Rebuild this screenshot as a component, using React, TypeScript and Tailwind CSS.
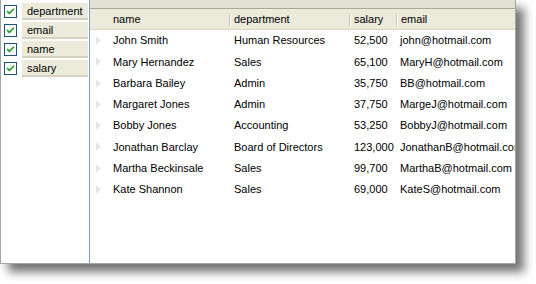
import { Check } from "lucide-react";

const fields = ["department", "email", "name", "salary"];

const rows = [
  ["John Smith", "Human Resources", "52,500", "john@hotmail.com"],
  ["Mary Hernandez", "Sales", "65,100", "MaryH@hotmail.com"],
  ["Barbara Bailey", "Admin", "35,750", "BB@hotmail.com"],
  ["Margaret Jones", "Admin", "37,750", "MargeJ@hotmail.com"],
  ["Bobby Jones", "Accounting", "53,250", "BobbyJ@hotmail.com"],
  ["Jonathan Barclay", "Board of Directors", "123,000", "JonathanB@hotmail.com"],
  ["Martha Beckinsale", "Sales", "99,700", "MarthaB@hotmail.com"],
  ["Kate Shannon", "Sales", "69,000", "KateS@hotmail.com"],
];

const cols = [
  { title: "name", w: "w-[120px]" },
  { title: "department", w: "w-[120px]" },
  { title: "salary", w: "w-[47px]" },
  { title: "email", w: "flex-1" },
];

function HeaderCell({ title, w, first }: { title: string; w: string; first?: boolean }) {
  return (
    <div className={`${w} flex items-center h-full min-w-0`}>
      {first ? (
        <span className="w-[4px]" />
      ) : (
        <span className="flex h-[12px] mr-[3px]">
          <span className="w-px bg-[#c7c5b2]" />
          <span className="w-px bg-white" />
        </span>
      )}
      <span className="truncate">{title}</span>
    </div>
  );
}

export default function App() {
  return (
    <div
      className="w-[536px] h-[284px] bg-white text-[11px] text-black"
      style={{ fontFamily: '"Liberation Sans", Arial, sans-serif' }}
    >
      <div className="w-[516px] h-[264px] flex border-l border-r border-b border-[#a5a5a5] bg-white shadow-[8px_8px_9px_rgba(0,0,0,0.55)]">
        {/* column chooser */}
        <div className="w-[89px] shrink-0 flex flex-col pt-[2px] border-r border-[#7f9db9]">
          {fields.map((f) => (
            <div key={f} className="h-[19px] flex items-center">
              <div className="ml-[3px] w-[13px] h-[13px] border border-[#1c5180] bg-white flex items-center justify-center">
                <Check className="w-[9px] h-[9px] text-[#21a121]" strokeWidth={4.5} />
              </div>
              <div className="ml-[5px] w-[66px] h-[17px] bg-[#ebeadb] border-b-2 border-[#d6d2c2] flex items-center pl-[5px] pt-px">
                {f}
              </div>
            </div>
          ))}
        </div>

        {/* grid */}
        <div className="flex-1 min-w-0 flex flex-col overflow-hidden">
          <div className="h-[8px] bg-[#e3e1d4]" />
          <div className="h-px bg-[#aca899]" />
          <div className="h-[21px] flex bg-[#ebeadb] border-b border-[#d8d5c4] pt-px">
            <div className="w-[19px]" />
            {cols.map((c, i) => (
              <HeaderCell key={c.title} title={c.title} w={c.w} first={i === 0} />
            ))}
          </div>
          {rows.map((r) => (
            <div key={r[0]} className="h-[21.25px] shrink-0 flex items-center whitespace-nowrap">
              <div className="w-[19px] flex items-center pl-[6px]">
                <svg width="5" height="9" viewBox="0 0 5 9">
                  <path d="M0 0 L5 4.5 L0 9 Z" fill="#e6e6e6" />
                </svg>
              </div>
              <div className="w-[120px] pl-[4px]">{r[0]}</div>
              <div className="w-[120px] pl-[5px]">{r[1]}</div>
              <div className="w-[47px] pl-[5px]">{r[2]}</div>
              <div className="flex-1 pl-[4px] overflow-hidden">{r[3]}</div>
            </div>
          ))}
        </div>
      </div>
    </div>
  );
}
